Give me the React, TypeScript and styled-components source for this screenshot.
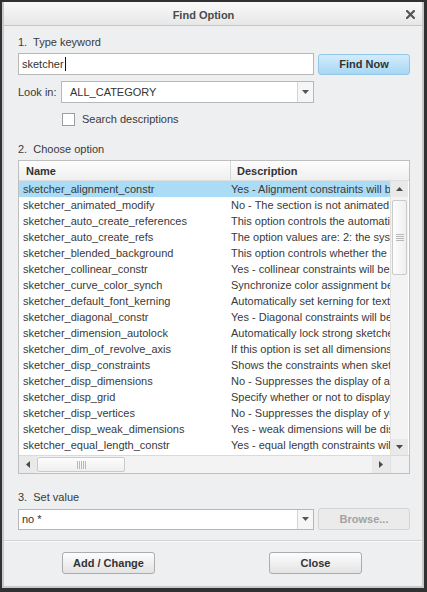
import React from "react";
import styled, { createGlobalStyle } from "styled-components";

const Global = createGlobalStyle`
  html, body { margin: 0; padding: 0; background: #313131; }
  body { font-family: "Liberation Sans", Arial, sans-serif; font-size: 11px; color: #333; }
  * { box-sizing: border-box; }
`;

const Shell = styled.div`
  width: 427px;
  height: 592px;
  padding: 2px 3px 4px 2px;
  background: #313131;
  display: flex;
`;

const Dialog = styled.div`
  flex: 1;
  display: flex;
  flex-direction: column;
  background: #eeeff0;
  border: solid #c9c9c9;
  border-width: 0 2px 2px 2px;
`;

const TitleBar = styled.div`
  height: 24px;
  flex: none;
  display: flex;
  align-items: center;
  padding-top: 3px;
  border-bottom: 1px solid #c6c6c6;
  background: linear-gradient(#f9f9f9, #e7e7e7);
`;

const Title = styled.div`
  flex: 1;
  text-align: center;
  font-weight: bold;
  color: #4a4a4a;
  line-height: 14px;
`;

const CloseBox = styled.div`
  width: 15px;
  margin-right: 4px;
  display: flex;
  justify-content: center;
  align-items: center;
  margin-top: -2px;
`;

const Body = styled.div`
  display: flex;
  flex-direction: column;
  padding: 9px 0 0 14px;
`;

const SectionLabel = styled.div<{ $top?: number }>`
  line-height: 14px;
  height: 14px;
  margin-top: ${(p) => p.$top ?? 0}px;
  white-space: pre;
  color: #3a3a3a;
`;

const FieldRow = styled.div<{ $top: number }>`
  display: flex;
  align-items: center;
  gap: 4px;
  margin-top: ${(p) => p.$top}px;
  width: 392px;
`;

const TextField = styled.div<{ $h: number }>`
  width: 296px;
  height: ${(p) => p.$h}px;
  background: #fff;
  border: 1px solid #b7b7b7;
  display: flex;
  align-items: center;
  padding-left: 3px;
  color: #333;
`;

const Caret = styled.span`
  display: inline-block;
  width: 1px;
  height: 14px;
  background: #111;
  margin-left: 1px;
`;

const ComboText = styled.div`
  flex: 1;
  padding-left: 3px;
  white-space: pre;
`;

const ComboArrow = styled.div`
  width: 16px;
  align-self: stretch;
  border-left: 1px solid #d3d3d3;
  background: #f6f6f6;
  display: flex;
  align-items: center;
  justify-content: center;
`;

const PushButton = styled.button<{ $variant: "blue" | "plain" | "disabled"; $w: number; $h: number }>`
  width: ${(p) => p.$w}px;
  height: ${(p) => p.$h}px;
  padding: 0;
  border-radius: 3px;
  font-family: inherit;
  font-size: 11px;
  font-weight: bold;
  cursor: default;
  border: 1px solid
    ${(p) => (p.$variant === "blue" ? "#93c7e8" : p.$variant === "plain" ? "#acacac" : "#d4d4d4")};
  color: ${(p) => (p.$variant === "disabled" ? "#a2a2a2" : "#333")};
  background: ${(p) =>
    p.$variant === "blue"
      ? "linear-gradient(#d3edfc, #a7d7f4)"
      : p.$variant === "plain"
      ? "linear-gradient(#fdfdfd, #e3e3e3)"
      : "#ebebeb"};
`;

const LookRow = styled.div`
  display: flex;
  align-items: center;
  margin-top: 6px;
`;

const LookLabel = styled.div`
  width: 43px;
  color: #3a3a3a;
`;

const SelectBox = styled.div`
  width: 253px;
  height: 22px;
  background: #fff;
  border: 1px solid #b7b7b7;
  display: flex;
  align-items: center;
  padding-left: 5px;
`;

const CheckRow = styled.label`
  display: flex;
  align-items: center;
  gap: 7px;
  height: 14px;
  margin-top: 9px;
  padding-left: 44px;
  color: #3a3a3a;
`;

const CheckBox = styled.span`
  width: 13px;
  height: 13px;
  border: 1px solid #9d9d9d;
  background: #fff;
`;

const Table = styled.div`
  margin-top: 4px;
  width: 392px;
  height: 314px;
  border: 1px solid #bfbfbf;
  background: #fff;
  display: grid;
  grid-template-columns: 371px 19px;
  grid-template-rows: 20px 274px 18px;
`;

const Header = styled.div`
  grid-column: 1 / -1;
  display: flex;
  background: linear-gradient(#fdfdfd, #efefef);
  border-bottom: 1px solid #dedede;
`;

const HeadCell = styled.div<{ $w?: number }>`
  ${(p) => (p.$w ? `width: ${p.$w}px; border-right: 1px solid #d6d6d6;` : "flex: 1;")}
  display: flex;
  align-items: center;
  padding-left: ${(p) => (p.$w ? 7 : 6)}px;
  font-weight: bold;
  color: #333;
`;

const Rows = styled.div`
  overflow: hidden;
`;

const Row = styled.div<{ $selected?: boolean }>`
  display: flex;
  height: 16px;
  line-height: 16px;
  white-space: nowrap;
  background: ${(p) => (p.$selected ? "#abdcf6" : "transparent")};
  color: #3a3a3a;
`;

const NameCell = styled.div`
  width: 212px;
  flex: none;
  padding-left: 4px;
  overflow: hidden;
`;

const DescCell = styled.div`
  flex: none;
`;

const VScroll = styled.div`
  width: 18px;
  display: flex;
  flex-direction: column;
  background: #f3f3f3;
  border-left: 1px solid #e2e2e2;
`;

const HScroll = styled.div`
  display: flex;
  background: #f3f3f3;
  border-top: 1px solid #dadada;
`;

const ScrollBtn = styled.div<{ $dir: "v" | "h" }>`
  ${(p) => (p.$dir === "v" ? "height: 16px;" : "width: 18px;")}
  flex: none;
  display: flex;
  align-items: center;
  justify-content: center;
  background: #e9e9e9;
`;

const Track = styled.div<{ $dir: "v" | "h" }>`
  flex: 1;
  display: flex;
  flex-direction: ${(p) => (p.$dir === "v" ? "column" : "row")};
  padding: ${(p) => (p.$dir === "v" ? "3px 1px 0 1px" : "1px 0 1px 0")};
`;

const Thumb = styled.div<{ $dir: "v" | "h" }>`
  ${(p) => (p.$dir === "v" ? "height: 75px;" : "width: 88px;")}
  flex: none;
  display: flex;
  align-items: center;
  justify-content: center;
  background: linear-gradient(${(p) => (p.$dir === "v" ? "90deg" : "180deg")}, #fdfdfd, #efefef);
  border: 1px solid #cacaca;
  border-radius: 2px;
`;

const Corner = styled.div`
  background: #f0f0f0;
  border-top: 1px solid #dadada;
  border-left: 1px solid #e2e2e2;
`;

const Separator = styled.div`
  margin-top: 10px;
  border-top: 1px solid #d3d3d3;
  border-bottom: 1px solid #fafafa;
`;

const Footer = styled.div`
  display: flex;
  gap: 114px;
  padding: 10px 0 0 58px;
`;

const Tri = ({ dir, color = "#4a4a4a" }: { dir: "up" | "down" | "left" | "right"; color?: string }) => {
  const pts = {
    up: "0,4 7,4 3.5,0",
    down: "0,0 7,0 3.5,4",
    left: "4,0 4,7 0,3.5",
    right: "0,0 0,7 4,3.5",
  }[dir];
  const vert = dir === "up" || dir === "down";
  return (
    <svg width={vert ? 7 : 4} height={vert ? 4 : 7} viewBox={vert ? "0 0 7 4" : "0 0 4 7"}>
      <polygon points={pts} fill={color} />
    </svg>
  );
};

const Grip = ({ dir }: { dir: "v" | "h" }) =>
  dir === "v" ? (
    <svg width="8" height="8" viewBox="0 0 8 8">
      {[0.5, 2.5, 4.5, 6.5].map((y) => (
        <line key={y} x1="0" x2="8" y1={y} y2={y} stroke="#b8b8b8" strokeWidth="1" />
      ))}
    </svg>
  ) : (
    <svg width="9" height="8" viewBox="0 0 9 8">
      {[0.5, 2.5, 4.5, 6.5, 8.5].map((x) => (
        <line key={x} y1="0" y2="8" x1={x} x2={x} stroke="#b8b8b8" strokeWidth="1" />
      ))}
    </svg>
  );

const options: [string, string][] = [
  ["sketcher_alignment_constr", "Yes - Alignment constraints will be assumed."],
  ["sketcher_animated_modify", "No - The section is not animated after modify."],
  ["sketcher_auto_create_references", "This option controls the automatic creation of references."],
  ["sketcher_auto_create_refs", "The option values are: 2: the system creates references."],
  ["sketcher_blended_background", "This option controls whether the background is blended."],
  ["sketcher_collinear_constr", "Yes - collinear constraints will be assumed."],
  ["sketcher_curve_color_synch", "Synchronize color assignment between curves."],
  ["sketcher_default_font_kerning", "Automatically set kerning for text entities."],
  ["sketcher_diagonal_constr", "Yes - Diagonal constraints will be assumed."],
  ["sketcher_dimension_autolock", "Automatically lock strong sketcher dimensions."],
  ["sketcher_dim_of_revolve_axis", "If this option is set all dimensions to the axis."],
  ["sketcher_disp_constraints", "Shows the constraints when sketching."],
  ["sketcher_disp_dimensions", "No - Suppresses the display of all dimensions."],
  ["sketcher_disp_grid", "Specify whether or not to display the grid."],
  ["sketcher_disp_vertices", "No - Suppresses the display of your vertices."],
  ["sketcher_disp_weak_dimensions", "Yes - weak dimensions will be displayed."],
  ["sketcher_equal_length_constr", "Yes - equal length constraints will be assumed."],
];

export default function App() {
  return (
    <>
      <Global />
      <Shell>
        <Dialog>
          <TitleBar>
            <Title>Find Option</Title>
            <CloseBox>
              <svg width="9" height="9" viewBox="0 0 9 9">
                <path d="M1 1 L8 8 M8 1 L1 8" stroke="#555" strokeWidth="2.2" strokeLinecap="square" />
              </svg>
            </CloseBox>
          </TitleBar>
          <Body>
            <SectionLabel>{"1.  Type keyword"}</SectionLabel>
            <FieldRow $top={4}>
              <TextField $h={22}>
                sketcher
                <Caret />
              </TextField>
              <PushButton $variant="blue" $w={92} $h={21}>
                Find Now
              </PushButton>
            </FieldRow>
            <LookRow>
              <LookLabel>Look in:</LookLabel>
              <SelectBox>
                <ComboText>ALL_CATEGORY</ComboText>
                <ComboArrow>
                  <Tri dir="down" color="#555" />
                </ComboArrow>
              </SelectBox>
            </LookRow>
            <CheckRow>
              <CheckBox />
              Search descriptions
            </CheckRow>
            <SectionLabel $top={16}>{"2.  Choose option"}</SectionLabel>
            <Table>
              <Header>
                <HeadCell $w={212}>Name</HeadCell>
                <HeadCell>Description</HeadCell>
              </Header>
              <Rows>
                {options.map(([name, desc], i) => (
                  <Row key={name} $selected={i === 0}>
                    <NameCell>{name}</NameCell>
                    <DescCell>{desc}</DescCell>
                  </Row>
                ))}
              </Rows>
              <VScroll>
                <ScrollBtn $dir="v">
                  <Tri dir="up" />
                </ScrollBtn>
                <Track $dir="v">
                  <Thumb $dir="v">
                    <Grip dir="v" />
                  </Thumb>
                </Track>
                <ScrollBtn $dir="v">
                  <Tri dir="down" />
                </ScrollBtn>
              </VScroll>
              <HScroll>
                <ScrollBtn $dir="h">
                  <Tri dir="left" />
                </ScrollBtn>
                <Track $dir="h">
                  <Thumb $dir="h">
                    <Grip dir="h" />
                  </Thumb>
                </Track>
                <ScrollBtn $dir="h">
                  <Tri dir="right" />
                </ScrollBtn>
              </HScroll>
              <Corner />
            </Table>
            <SectionLabel $top={16}>{"3.  Set value"}</SectionLabel>
            <FieldRow $top={4}>
              <TextField $h={21} style={{ paddingLeft: 0 }}>
                <ComboText>no *</ComboText>
                <ComboArrow>
                  <Tri dir="down" color="#555" />
                </ComboArrow>
              </TextField>
              <PushButton $variant="disabled" $w={92} $h={22} disabled>
                Browse...
              </PushButton>
            </FieldRow>
          </Body>
          <Separator />
          <Footer>
            <PushButton $variant="plain" $w={93} $h={22}>
              Add / Change
            </PushButton>
            <PushButton $variant="plain" $w={93} $h={22}>
              Close
            </PushButton>
          </Footer>
        </Dialog>
      </Shell>
    </>
  );
}
